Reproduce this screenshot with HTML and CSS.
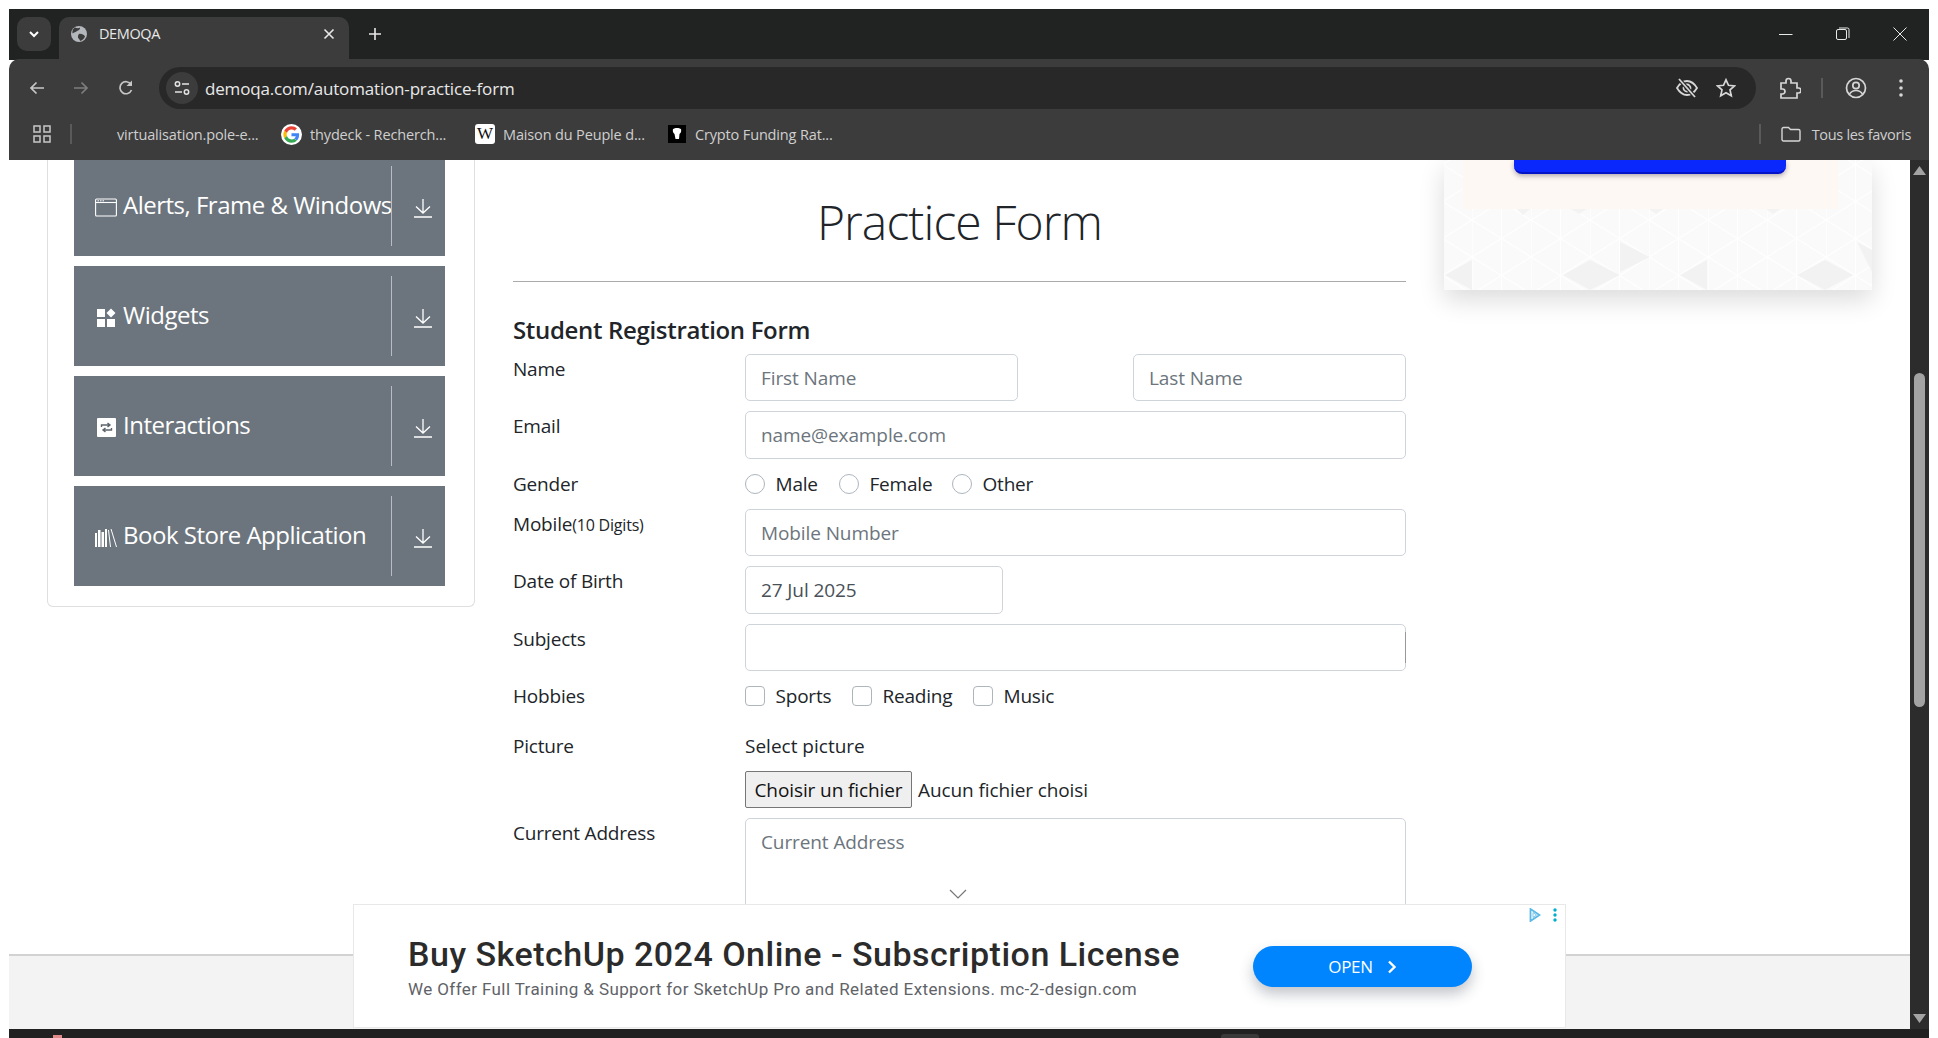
FILE: index.html
```html
<!DOCTYPE html>
<html lang="fr">

<head>
    <meta charset="UTF-8" />
    <title>DEMOQA</title>
    <link rel="stylesheet" href="styles.css">
</head>

<body>
    <div class="window">
        <!-- onglets -->
        <div class="tabstrip">
            <div class="tab-search">
                <svg width="14" height="14" viewBox="0 0 14 14"><path d="M3 5l4 4 4-4" fill="none" stroke="#fff" stroke-width="2"/></svg>
            </div>
            <div class="tab">
                <svg class="tab-globe" width="18" height="18" viewBox="0 0 18 18"><circle cx="9" cy="9" r="8" fill="#b4b8bc"/><path d="M5 2.500c2 1 4 1 5 0 .5 2-1.500 3-3 3.500-1 1.500-3 1-4.500 2.500C2 6 3 3.500 5 2.500zM9 9c2-.5 5 .5 6 2.500-1 2.500-3 4-5 4.500 0-2-2.500-2.500-2-4.500 0-1 .5-2 1-2.500z" fill="#3c3c3c"/></svg>
                <span class="tab-title">DEMOQA</span>
                <svg class="tab-close" width="12" height="12" viewBox="0 0 12 12"><path d="M1.500 1.500l9 9M10.500 1.500l-9 9" stroke="#e8e8e8" stroke-width="1.600"/></svg>
            </div>
            <svg class="new-tab" width="14" height="14" viewBox="0 0 14 14"><path d="M7 1v12M1 7h12" stroke="#e8e8e8" stroke-width="1.600"/></svg>
            <div class="win-controls">
                <svg width="14" height="14" viewBox="0 0 14 14"><path d="M0 7.500h13.500" stroke="#e8e8e8" stroke-width="1"/></svg>
                <svg width="14" height="14" viewBox="0 0 14 14"><rect x=".5" y="2.500" width="10" height="10" rx="1.500" fill="none" stroke="#e8e8e8"/><path d="M3 1h8.500a1.500 1.500 0 0 1 1.500 1.500V11" fill="none" stroke="#e8e8e8"/></svg>
                <svg width="14" height="14" viewBox="0 0 14 14"><path d="M.5.5l13 13M13.500.5l-13 13" stroke="#e8e8e8" stroke-width="1"/></svg>
            </div>
        </div>

        <!-- barre d'adresse -->
        <div class="toolbar">
            <div class="nav-row">
                <svg class="nav-back" width="18" height="18" viewBox="0 0 18 18"><path d="M16 9H3M8.500 3.500L3 9l5.500 5.500" fill="none" stroke="#c7c7c7" stroke-width="1.700"/></svg>
                <svg class="nav-forward" width="18" height="18" viewBox="0 0 18 18"><path d="M2 9h13M9.500 3.500L15 9l-5.500 5.500" fill="none" stroke="#7d7d7d" stroke-width="1.700"/></svg>
                <svg class="nav-reload" width="18" height="18" viewBox="0 0 18 18"><path d="M14.500 11a6 6 0 1 1-.5-5.500" fill="none" stroke="#c7c7c7" stroke-width="1.700"/><path d="M15 1.500V7H9.500z" fill="#c7c7c7"/></svg>
                <div class="omnibox">
                    <div class="site-chip">
                        <svg width="18" height="18" viewBox="0 0 18 18"><circle cx="4.500" cy="5" r="2.200" fill="none" stroke="#e3e3e3" stroke-width="1.500"/><path d="M9 5h7M2 13h7" stroke="#e3e3e3" stroke-width="1.500"/><circle cx="13.500" cy="13" r="2.200" fill="none" stroke="#e3e3e3" stroke-width="1.500"/></svg>
                    </div>
                    <span class="url">demoqa.com/automation-practice-form</span>
                    <svg class="omni-eye" width="24" height="24" viewBox="0 0 24 24"><path d="M2 12c3-5 6.500-7 10-7s7 2 10 7c-3 5-6.500 7-10 7s-7-2-10-7z" fill="none" stroke="#d6d6d6" stroke-width="1.800"/><circle cx="12" cy="12" r="3.500" fill="none" stroke="#d6d6d6" stroke-width="1.800"/><path d="M4 3l16 18" stroke="#282828" stroke-width="4"/><path d="M4 3l16 18" stroke="#d6d6d6" stroke-width="1.800"/></svg>
                    <svg class="omni-star" width="20" height="20" viewBox="0 0 20 20"><path d="M10 1.800l2.500 5.500 6 .6-4.500 4 1.300 5.900L10 14.800l-5.300 3 1.300-5.900-4.500-4 6-.6z" fill="none" stroke="#d6d6d6" stroke-width="1.700"/></svg>
                </div>
                <svg class="tb-puzzle" width="22" height="22" viewBox="0 0 22 22"><path d="M2 6h5V4a2.500 2.500 0 0 1 5 0v2h6v5h1.500a2.500 2.500 0 0 1 0 5H18v5H2v-4h1.500a2.500 2.500 0 0 0 0-5H2z" fill="none" stroke="#d6d6d6" stroke-width="1.700"/></svg>
                <span class="tb-divider"></span>
                <svg class="tb-profile" width="22" height="22" viewBox="0 0 22 22"><circle cx="11" cy="11" r="9.500" fill="none" stroke="#d6d6d6" stroke-width="1.700"/><circle cx="11" cy="8.500" r="3.200" fill="none" stroke="#d6d6d6" stroke-width="1.700"/><path d="M4.500 17c2-3 4-3.500 6.500-3.500s4.500.5 6.500 3.500" fill="none" stroke="#d6d6d6" stroke-width="1.700"/></svg>
                <svg class="tb-menu" width="6" height="20" viewBox="0 0 6 20"><circle cx="3" cy="3" r="1.800" fill="#d6d6d6"/><circle cx="3" cy="10" r="1.800" fill="#d6d6d6"/><circle cx="3" cy="17" r="1.800" fill="#d6d6d6"/></svg>
            </div>

            <div class="bookmarks">
                <svg class="bm-apps" width="18" height="18" viewBox="0 0 18 18"><g fill="none" stroke="#c7c7c7" stroke-width="1.500"><rect x="1" y="1" width="6" height="6"/><rect x="11" y="1" width="6" height="6"/><rect x="1" y="11" width="6" height="6"/><rect x="11" y="11" width="6" height="6"/></g></svg>
                <span class="bm-divider bm-divider-left"></span>
                <span class="bm-text bm-first">virtualisation.pole-e...</span>
                <svg class="bm-icon bm-google" width="21" height="21" viewBox="-7 -7 62 62"><circle cx="24" cy="24" r="31" fill="#fff"/><path fill="#EA4335" d="M24 9.500c3.500 0 6.700 1.200 9.200 3.600l6.900-6.900C35.900 2.400 30.500 0 24 0 14.600 0 6.500 5.400 2.600 13.200l8 6.200C12.500 13.700 17.800 9.500 24 9.500z"/><path fill="#4285F4" d="M46.500 24.500c0-1.600-.1-3.100-.4-4.500H24v9h12.700c-.5 2.900-2.200 5.400-4.700 7l7.700 6c4.500-4.200 6.800-10.300 6.800-17.500z"/><path fill="#FBBC05" d="M10.500 28.600c-.5-1.400-.8-3-.8-4.600s.3-3.200.8-4.600l-8-6.200C.9 16.500 0 20.100 0 24s.9 7.500 2.600 10.800z"/><path fill="#34A853" d="M24 48c6.500 0 11.900-2.100 15.900-5.800l-7.700-6c-2.200 1.500-4.900 2.300-8.200 2.300-6.200 0-11.500-4.200-13.400-9.900l-8 6.200C6.500 42.600 14.600 48 24 48z"/></svg>
                <span class="bm-text bm-second">thydeck - Recherch...</span>
                <span class="bm-wiki">W</span>
                <span class="bm-text bm-third">Maison du Peuple d...</span>
                <svg class="bm-icon bm-crypto" width="18" height="18" viewBox="0 0 18 18"><rect width="18" height="18" fill="#000"/><path d="M5 4c2-1.500 6-1.500 8 0 .5 2 0 4-1.500 5L11 14H7.500L6.500 9C5 8 4.500 6 5 4z" fill="#fff"/></svg>
                <span class="bm-text bm-fourth">Crypto Funding Rat...</span>
                <span class="bm-divider bm-divider-right"></span>
                <svg class="bm-folder" width="20" height="16" viewBox="0 0 20 16"><path d="M1 3a1.500 1.500 0 0 1 1.500-1.500h5L9.500 3.500h8A1.500 1.500 0 0 1 19 5v8.500a1.500 1.500 0 0 1-1.500 1.500h-15A1.500 1.500 0 0 1 1 13.500z" fill="none" stroke="#d6d6d6" stroke-width="1.400"/></svg>
                <span class="bm-text bm-all">Tous les favoris</span>
            </div>
        </div>

        <!-- page -->
        <div class="viewport">
            <div class="page">
                <div class="content">
                    <aside class="side-card">
                        <div class="side-group">
                            <div class="side-body">
                                <svg class="side-icon" width="22" height="19" viewBox="0 0 22 19"><rect x=".6" y="1" width="20.800" height="17" rx="1" fill="none" stroke="#fff" stroke-width="1.100"/><path d="M.6 4.500h20.800" stroke="#fff" stroke-width="1.100"/><path d="M2.500 2.800h1.500M5 2.800h1.500M7.500 2.800H9" stroke="#fff"/></svg>
                                <span>Alerts, Frame &amp; Windows</span>
                            </div>
                            <div class="side-arrow">
                                <svg width="18" height="20" viewBox="0 0 18 20"><path d="M9 1v14M2 8.500L9 15l7-6.500M0 19h18" fill="none" stroke="#fff" stroke-width="1.300"/></svg>
                            </div>
                        </div>
                        <div class="side-group">
                            <div class="side-body">
                                <svg class="side-icon" width="22" height="19" viewBox="0 0 22 19"><path d="M2 1h8v8H2zM2 11h8v8H2zM12 11h8v8h-8zM16 .5l4.500 4.500-4.500 4.500L11.500 5z" fill="#fff"/></svg>
                                <span>Widgets</span>
                            </div>
                            <div class="side-arrow">
                                <svg width="18" height="20" viewBox="0 0 18 20"><path d="M9 1v14M2 8.500L9 15l7-6.500M0 19h18" fill="none" stroke="#fff" stroke-width="1.300"/></svg>
                            </div>
                        </div>
                        <div class="side-group">
                            <div class="side-body">
                                <svg class="side-icon" width="22" height="19" viewBox="0 0 22 19"><rect x="2" width="19" height="19" rx="1" fill="#fff"/><path d="M6.500 9V7h8M12.500 5l2.500 2-2.500 2M16.500 10v2h-8M10.500 10L8 12l2.500 2" fill="none" stroke="#5c646c" stroke-width="1.400"/></svg>
                                <span>Interactions</span>
                            </div>
                            <div class="side-arrow">
                                <svg width="18" height="20" viewBox="0 0 18 20"><path d="M9 1v14M2 8.500L9 15l7-6.500M0 19h18" fill="none" stroke="#fff" stroke-width="1.300"/></svg>
                            </div>
                        </div>
                        <div class="side-group">
                            <div class="side-body">
                                <svg class="side-icon" width="22" height="19" viewBox="0 0 22 19"><path d="M0 5h2v14H0zM3 2h2.500v17H3zM6.500 4H9v15H6.500zM10 1h2v18h-2z" fill="#fff"/><path d="M13.500 2l2 17M16 1l5.500 18" stroke="#fff" stroke-width="1" fill="none"/></svg>
                                <span>Book Store Application</span>
                            </div>
                            <div class="side-arrow">
                                <svg width="18" height="20" viewBox="0 0 18 20"><path d="M9 1v14M2 8.500L9 15l7-6.500M0 19h18" fill="none" stroke="#fff" stroke-width="1.300"/></svg>
                            </div>
                        </div>
                    </aside>

                    <main class="form-col">
                        <h1 class="form-title">Practice Form</h1>
                        <hr class="form-rule">
                        <h5 class="form-sub">Student Registration Form</h5>

                        <div class="row row-47">
                            <label class="row-label">Name</label>
                            <div class="row-fields fields-split">
                                <input class="field field-half" type="text" placeholder="First Name">
                                <input class="field field-half" type="text" placeholder="Last Name">
                            </div>
                        </div>
                        <div class="row row-48">
                            <label class="row-label">Email</label>
                            <div class="row-fields"><input class="field" type="text" placeholder="name@example.com"></div>
                        </div>
                        <div class="row row-30">
                            <label class="row-label">Gender</label>
                            <div class="row-fields choices">
                                <span class="choice choice-male"><i class="radio"></i>Male</span>
                                <span class="choice choice-female"><i class="radio"></i>Female</span>
                                <span class="choice"><i class="radio"></i>Other</span>
                            </div>
                        </div>
                        <div class="row row-47">
                            <label class="row-label">Mobile<small class="hint">(10 Digits)</small></label>
                            <div class="row-fields"><input class="field" type="text" placeholder="Mobile Number"></div>
                        </div>
                        <div class="row row-48">
                            <label class="row-label">Date of Birth</label>
                            <div class="row-fields"><input class="field field-date" type="text" value="27 Jul 2025"></div>
                        </div>
                        <div class="row row-47">
                            <label class="row-label">Subjects</label>
                            <div class="row-fields"><div class="field subjects"></div></div>
                        </div>
                        <div class="row row-30 row-hobbies">
                            <label class="row-label">Hobbies</label>
                            <div class="row-fields choices">
                                <span class="choice choice-sports"><i class="check"></i>Sports</span>
                                <span class="choice choice-reading"><i class="check"></i>Reading</span>
                                <span class="choice"><i class="check"></i>Music</span>
                            </div>
                        </div>
                        <div class="row row-picture">
                            <label class="row-label">Picture</label>
                            <div class="row-fields">
                                <div class="select-pic">Select picture</div>
                                <div class="file-line">
                                    <button class="file-btn">Choisir un fichier</button>
                                    <span>Aucun fichier choisi</span>
                                </div>
                            </div>
                        </div>
                        <div class="row">
                            <label class="row-label">Current Address</label>
                            <div class="row-fields"><textarea class="field address" placeholder="Current Address"></textarea></div>
                        </div>
                    </main>

                    <div class="ad-col">
                        <div class="promo">
                            <svg class="promo-bg" width="428" height="130" viewBox="0 -30 428 130">
                                <defs>
                                    <pattern id="tri" width="59" height="37" patternUnits="userSpaceOnUse" x="28" y="30">
                                        <rect width="59" height="37" fill="#fafafa"/>
                                        <path d="M0 0L29.500 18.500 59 0M0 37L29.500 18.500 59 37M0 0v37M29.500 0v37" fill="none" stroke="#fff" stroke-width="1.300"/>
                                    </pattern>
                                </defs>
                                <rect y="-30" width="428" height="130" fill="url(#tri)"/>
                                <path d="M1 85l27-15v30zM119 85l27-15v30zM146 70l30 15-30 15zM176 52l30 15-30 15zM236 85l27-15v30zM353 85l28-15v30zM381 70l28 15-28 15zM413 52l15 8v22z" fill="#f2f2f2"/>
                                <path d="M73 19h13l-7 6zM127 19h16l-8 5zM205 19h14l-7 5zM322 19h14l-7 5z" fill="#f3f3f3"/>
                            </svg>
                            <div class="promo-inner">
                                <div class="promo-btn"></div>
                            </div>
                        </div>
                    </div>
                </div>
                <footer class="page-foot"></footer>
            </div>

            <div class="scrollbar">
                <svg width="13" height="9" viewBox="0 0 13 9"><path d="M6.500 0L13 9H0z" fill="#a3a3a3"/></svg>
                <div class="scroll-thumb"></div>
                <svg class="scroll-down" width="13" height="9" viewBox="0 0 13 9"><path d="M0 0h13L6.500 9z" fill="#a3a3a3"/></svg>
            </div>

            <svg class="hide-chevron" width="18" height="10" viewBox="0 0 18 10"><path d="M1 1l8 8 8-8" fill="none" stroke="#777" stroke-width="1.200"/></svg>

            <div class="ad-banner">
                <svg class="ad-choice" width="12" height="14" viewBox="0 0 12 14"><path d="M1.500 1v12l9-6z" fill="none" stroke="#5cb8e6" stroke-width="1.800"/><path d="M4 4.500v5l3.500-2.500z" fill="none" stroke="#5cb8e6" stroke-width=".8"/></svg>
                <svg class="ad-dots" width="4" height="14" viewBox="0 0 4 14"><circle cx="2" cy="2" r="1.700" fill="#00aecd"/><circle cx="2" cy="7" r="1.700" fill="#00aecd"/><circle cx="2" cy="12" r="1.700" fill="#00aecd"/></svg>
                <div class="ad-copy">
                    <div class="ad-title">Buy SketchUp 2024 Online - Subscription License</div>
                    <div class="ad-desc">We Offer Full Training &amp; Support for SketchUp Pro and Related Extensions. mc-2-design.com</div>
                </div>
                <div class="ad-open">
                    <span>OPEN</span>
                    <svg width="10" height="14" viewBox="0 0 10 14"><path d="M2 1.500L7.500 7 2 12.500" fill="none" stroke="#fff" stroke-width="2.400"/></svg>
                </div>
            </div>
        </div>

        <div class="taskbar">
            <span class="task-red"></span>
            <span class="task-tab"></span>
        </div>
    </div>
</body>

</html>
```

FILE: styles.css
```css
* {
    box-sizing: border-box;
}

html,
body {
    margin: 0;
    height: 100%;
    overflow: hidden;
    background-color: #fff;
}

body {
    padding: 9px 9px 0 9px;
    font-family: "Open Sans", "Noto Sans", sans-serif;
    color: #212529;
}

.window {
    height: 1029px;
    display: flex;
    flex-direction: column;
}

/* onglets */
.tabstrip {
    height: 51px;
    flex: none;
    background-color: #212322;
    display: flex;
    align-items: flex-start;
    padding: 8px 0 0 8px;
    position: relative;
}

.tab-search {
    width: 34px;
    height: 34px;
    border-radius: 10px;
    background-color: #3c3c3c;
    display: flex;
    align-items: center;
    justify-content: center;
}

.tab {
    width: 290px;
    height: 43px;
    margin-left: 8px;
    background-color: #3c3c3c;
    border-radius: 10px 10px 0 0;
    display: flex;
    align-items: flex-start;
    padding: 8px 14px 0 11px;
    color: #e8e8e8;
}

.tab-title {
    margin-left: 11px;
    font-size: 14.500px;
    line-height: 18px;
    flex: 1;
    letter-spacing: -0.4px;
}

.tab-close {
    margin-top: 3px;
}

.new-tab {
    margin: 10px 0 0 19px;
}

.win-controls {
    margin-left: auto;
    margin-top: 10px;
    margin-right: 22px;
    display: flex;
    gap: 43px;
}

/* barre d'adresse */
.toolbar {
    height: 101px;
    flex: none;
    background-color: #3c3c3c;
    border-radius: 10px 10px 0 0;
    margin-top: -1px;
    position: relative;
}

.nav-row {
    height: 58px;
    display: flex;
    align-items: center;
    padding-top: 0;
    position: relative;
}

.nav-back {
    margin-left: 19px;
}

.nav-forward {
    margin-left: 26px;
}

.nav-reload {
    margin-left: 27px;
}

.omnibox {
    width: 1597px;
    height: 42px;
    margin-left: 24px;
    background-color: #282828;
    border-radius: 21px;
    display: flex;
    align-items: center;
    padding-left: 7px;
    color: #e8e8e8;
}

.site-chip {
    width: 32px;
    height: 32px;
    border-radius: 50%;
    background-color: #3c3c3c;
    display: flex;
    align-items: center;
    justify-content: center;
}

.url {
    margin-left: 7px;
    font-size: 17px;
    letter-spacing: -0.17px;
    flex: 1;
}

.omni-eye {
    margin-right: 17px;
}

.omni-star {
    margin-right: 20px;
}

.tb-puzzle {
    margin-left: 23px;
}

.tb-divider {
    width: 2px;
    height: 20px;
    background-color: #5a5a5a;
    margin-left: 20px;
}

.tb-profile {
    margin-left: 22px;
}

.tb-menu {
    margin-left: 31px;
}

.bookmarks {
    height: 42px;
    display: flex;
    align-items: center;
    color: #cfcfcf;
    position: relative;
    top: -4px;
}

.bm-apps {
    margin-left: 24px;
}

.bm-divider {
    width: 2px;
    height: 20px;
    background-color: #5a5a5a;
}

.bm-divider-left {
    margin-left: 19px;
}

.bm-divider-right {
    margin-left: auto;
}

.bm-text {
    font-size: 14.500px;
    letter-spacing: -0.15px;
    white-space: nowrap;
}

.bm-first {
    margin-left: 45px;
    width: 164px;
}

.bm-second {
    margin-left: 8px;
    width: 165px;
}

.bm-third {
    margin-left: 8px;
    width: 165px;
}

.bm-fourth {
    margin-left: 9px;
}

.bm-all {
    margin-right: 18px;
    letter-spacing: -0.3px;
}

.bm-wiki {
    width: 20px;
    height: 20px;
    background-color: #fff;
    border-radius: 3px;
    color: #111;
    font-family: "Liberation Serif", serif;
    font-size: 17px;
    line-height: 20px;
    text-align: center;
}

.bm-folder {
    margin: 0 11px 0 20px;
}

/* page */
.viewport {
    flex: 1;
    display: flex;
    position: relative;
    min-height: 0;
    background-color: #fff;
}

.page {
    width: 1901px;
    display: flex;
    flex-direction: column;
}

.content {
    flex: 1;
    min-height: 0;
    overflow: hidden;
    display: flex;
    align-items: flex-start;
    padding-left: 38px;
}

.page-foot {
    height: 75px;
    flex: none;
    background-color: #f3f3f3;
    border-top: 2px solid #d2d2d2;
}

.side-card {
    width: 428px;
    flex: none;
    margin-top: -4px;
    padding: 0 29px 20px 26px;
    border: 1.500px solid #dfdfdf;
    border-top: none;
    border-radius: 0 0 6px 6px;
    display: flex;
    flex-direction: column;
    gap: 10px;
}

.side-group {
    height: 100px;
    background-color: #6c757d;
    color: #fff;
    display: flex;
    padding: 10px 0;
}

.side-body {
    flex: 1;
    display: flex;
    align-items: center;
    padding-left: 21px;
    font-size: 24px;
    letter-spacing: -0.5px;
    white-space: nowrap;
    overflow: hidden;
}

.side-body span {
    margin-left: 6px;
    margin-top: -3px;
}

.side-icon {
    flex: none;
    margin-top: 3px;
}

.side-arrow {
    width: 54px;
    flex: none;
    border-left: 1px solid #b9bdc1;
    display: flex;
    align-items: center;
    justify-content: center;
    padding: 4px 0 0 8px;
}

/* formulaire */
.form-col {
    width: 893px;
    flex: none;
    margin-left: 38px;
}

.form-title {
    margin: 27px 0 0 0;
    height: 70px;
    line-height: 70px;
    text-align: center;
    font-weight: 300;
    font-size: 48px;
    letter-spacing: -0.9px;
    color: #212529;
}

.form-rule {
    margin: 24px 0 0 0;
    border: none;
    border-top: 1.500px solid #aaa;
}

.form-sub {
    margin: 33px 0 0 0;
    height: 39px;
    line-height: 30px;
    font-size: 24px;
    font-weight: 600;
    letter-spacing: -0.33px;
}

.row {
    display: flex;
    margin-bottom: 10px;
}

.row-47 {
    height: 47px;
}

.row-48 {
    height: 48px;
}

.row-30 {
    height: 30px;
}

.row-hobbies {
    margin-bottom: 20px;
}

.row-label {
    width: 232px;
    flex: none;
    font-size: 19px;
    line-height: 30px;
    letter-spacing: -0.2px;
}

.hint {
    font-size: 16px;
}

.row-fields {
    flex: 1;
    font-size: 19px;
}

.fields-split {
    display: flex;
    justify-content: space-between;
}

.field {
    display: block;
    width: 100%;
    height: 100%;
    padding: 0 15px;
    border: 1.500px solid #ced4da;
    border-radius: 5px;
    background-color: #fff;
    font-family: inherit;
    font-size: 19px;
    letter-spacing: -0.1px;
    color: #495057;
    outline: none;
}

.field::placeholder {
    color: #6c757d;
    opacity: 1;
}

.field-half {
    width: 273px;
}

.field-date {
    width: 258px;
}

.subjects {
    position: relative;
}

.subjects::after {
    content: "";
    position: absolute;
    right: -1px;
    top: 7px;
    bottom: 7px;
    width: 1px;
    background-color: #999;
}

.address {
    height: 160px;
    padding-top: 8px;
    resize: none;
    line-height: 30px;
}

.choices {
    display: flex;
    align-items: center;
    letter-spacing: -0.2px;
}

.choice {
    display: flex;
    align-items: center;
}

.radio,
.check {
    width: 20px;
    height: 20px;
    margin-right: 10.500px;
    border: 1.200px solid #adb5bd;
    background-color: #fff;
    flex: none;
}

.radio {
    border-radius: 50%;
}

.check {
    border-radius: 4px;
}

.choice-male {
    width: 94px;
}

.choice-female {
    width: 113px;
}

.choice-sports {
    width: 107px;
}

.choice-reading {
    width: 121px;
}

.row-picture {
    height: 77px;
}

.select-pic {
    height: 40px;
    line-height: 30px;
}

.file-line {
    display: flex;
    align-items: center;
    gap: 6px;
    letter-spacing: -0.1px;
}

.file-btn {
    width: 167px;
    height: 37px;
    padding: 0;
    border: 1px solid #767676;
    border-radius: 2px;
    background-color: #efefef;
    font-family: inherit;
    font-size: 19px;
    letter-spacing: -0.1px;
    color: #111;
}

/* colonne pub */
.ad-col {
    width: 428px;
    flex: none;
    margin-left: 38px;
}

.promo {
    height: 130px;
    position: relative;
    box-shadow: 0 10px 24px rgba(0, 0, 0, 0.14);
    background-color: #fafafa;
}

.promo-bg {
    display: block;
    position: absolute;
    left: 0;
    top: 0;
}

.promo-inner {
    position: relative;
    width: 375px;
    height: 49px;
    margin-left: 19px;
    background-color: #fdf8f3;
    display: flex;
    justify-content: center;
}

.promo-btn {
    width: 272px;
    height: 14px;
    margin-left: -2px;
    background-color: #0a28fb;
    border-bottom: 2px solid #0412c8;
    border-radius: 0 0 8px 8px;
    box-shadow: 0 2px 5px rgba(60, 50, 80, 0.4);
}

/* barre de defilement */
.scrollbar {
    width: 19px;
    flex: none;
    background-color: #2c2c2c;
    display: flex;
    flex-direction: column;
    align-items: center;
    padding: 6px 0;
}

.scroll-thumb {
    width: 11px;
    height: 334px;
    margin-top: 198px;
    border-radius: 6px;
    background-color: #a3a3a3;
}

.scroll-down {
    margin-top: auto;
}

/* elements par-dessus la page */
.hide-chevron {
    position: absolute;
    left: 940px;
    top: 729px;
}

.ad-banner {
    position: absolute;
    left: 344px;
    right: 363px;
    bottom: 1px;
    height: 124px;
    background-color: #fff;
    border: 1.500px solid #e8e8e8;
    display: flex;
    align-items: flex-start;
    padding: 29px 0 0 54px;
}

.ad-choice {
    position: absolute;
    right: 24px;
    top: 3px;
}

.ad-dots {
    position: absolute;
    right: 8px;
    top: 3px;
}

.ad-copy {
    width: 845px;
    font-family: "Roboto", sans-serif;
}

.ad-title {
    font-size: 34px;
    line-height: 40px;
    font-weight: 500;
    color: #2b2b2b;
    white-space: nowrap;
    letter-spacing: 0.5px;
}

.ad-desc {
    margin-top: 4px;
    font-size: 17px;
    line-height: 22px;
    color: #5f6368;
    white-space: nowrap;
    letter-spacing: 0.4px;
}

.ad-open {
    width: 219px;
    height: 41px;
    margin-top: 12px;
    border-radius: 21px;
    background-color: #0085ff;
    color: #fff;
    display: flex;
    align-items: center;
    justify-content: center;
    gap: 14px;
    font-size: 17px;
    letter-spacing: -0.3px;
    box-shadow: 0 7px 14px rgba(50, 60, 80, 0.3);
}

.taskbar {
    height: 9px;
    flex: none;
    background-color: #212121;
    position: relative;
    display: flex;
    align-items: flex-end;
}

.task-red {
    width: 9px;
    height: 3px;
    margin-left: 44px;
    background-color: #e08a8a;
}

.task-tab {
    width: 38px;
    height: 4px;
    margin-left: 1159px;
    background-color: #3a3a3a;
    border-radius: 3px 3px 0 0;
}
```
